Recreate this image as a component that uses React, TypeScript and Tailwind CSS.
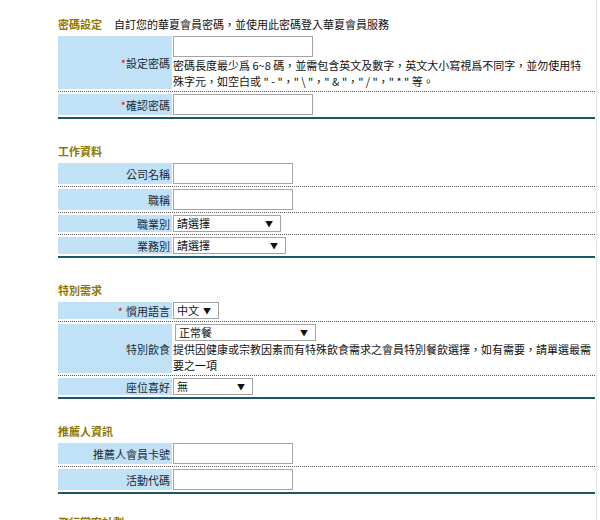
import type { ReactNode } from "react";

// Member profile form: password / work info / special needs / referrer sections.

function Section({
  title,
  desc,
  children,
  first = false,
}: {
  title: string;
  desc?: string;
  children: ReactNode;
  first?: boolean;
}) {
  return (
    <div className={first ? "" : "mt-[24px]"}>
      <div className="h-[18px] leading-[16px] text-[11px]">
        <span className="font-bold text-[#8f7700]">{title}</span>
        {desc && <span className="ml-[12px] text-[#111]">{desc}</span>}
      </div>
      <div className="border-b-2 border-[#1d5767]">{children}</div>
    </div>
  );
}

function Row({
  label,
  req,
  gap = false,
  last = false,
  children,
}: {
  label: string;
  req?: boolean;
  gap?: boolean;
  last?: boolean;
  children: ReactNode;
}) {
  return (
    <div
      className={
        last
          ? "flex pt-[2px] pb-[2px]"
          : "flex py-[2px] border-b border-dotted border-[#555]"
      }
    >
      <div className="w-[114px] shrink-0 bg-[#c1e2f6] flex items-center justify-end pr-[2px] text-[11px] leading-[16px] text-[#1b2a38]">
        {req && (
          <span className={gap ? "text-[#e01010] mr-[3px]" : "text-[#e01010]"}>*</span>
        )}
        {label}
      </div>
      <div className="flex-1 min-w-0 pl-[1px] text-[11px] leading-[16px] text-[#111]">{children}</div>
    </div>
  );
}

function TextBox({ w }: { w: string }) {
  return <div className={`${w} h-[21px] border border-[#a4a4a4] bg-white`} />;
}

function Select({ w, value, ml = "" }: { w: string; value: string; ml?: string }) {
  return (
    <div
      className={`${w} ${ml} h-[17px] border border-[#a4a4a4] bg-white flex items-center justify-between pl-[3px] pr-[7px] text-[11px] leading-[15px]`}
    >
      <span>{value}</span>
      <span className="text-[8px] leading-none text-[#111]">▼</span>
    </div>
  );
}

export default function App() {
  return (
    <div className="w-[600px] h-[520px] overflow-hidden bg-white font-['Noto_Sans_CJK_TC','Noto_Sans_CJK_SC',sans-serif]">
      <div className="w-[597px] h-full border-r border-[#e4e4e4] pl-[58px] pr-[1px] pt-[16px]">
        <Section first title="密碼設定" desc="自訂您的華夏會員密碼，並使用此密碼登入華夏會員服務">
          <Row label="設定密碼" req>
            <TextBox w="w-[140px]" />
            <div className="whitespace-nowrap">
              密碼長度最少爲 6~8 碼，並需包含英文及數字，英文大小寫視爲不同字，並勿使用特
              <br />
              殊字元，如空白或 " - "，" \ "，" &amp; "，" / "，" * " 等。
            </div>
          </Row>
          <Row label="確認密碼" req last>
            <TextBox w="w-[140px]" />
          </Row>
        </Section>

        <Section title="工作資料">
          <Row label="公司名稱">
            <TextBox w="w-[120px]" />
          </Row>
          <Row label="職稱">
            <TextBox w="w-[120px]" />
          </Row>
          <Row label="職業別">
            <Select w="w-[108px]" value="請選擇" />
          </Row>
          <Row label="業務別" last>
            <Select w="w-[113px]" value="請選擇" />
          </Row>
        </Section>

        <Section title="特別需求">
          <Row label="慣用語言" req gap>
            <Select w="w-[46px]" value="中文" />
          </Row>
          <Row label="特別飲食">
            <Select w="w-[141px]" ml="ml-[2px]" value="正常餐" />
            <div className="whitespace-nowrap">
              提供因健康或宗教因素而有特殊飲食需求之會員特別餐飲選擇，如有需要，請單選最需
              <br />
              要之一項
            </div>
          </Row>
          <Row label="座位喜好" last>
            <Select w="w-[80px]" value="無" />
          </Row>
        </Section>

        <Section title="推薦人資訊">
          <Row label="推薦人會員卡號">
            <TextBox w="w-[120px]" />
          </Row>
          <Row label="活動代碼" last>
            <TextBox w="w-[120px]" />
          </Row>
        </Section>

        <div className="mt-[20px] h-[18px] leading-[16px] text-[11px] font-bold text-[#8f7700]">
          飛行常客計劃
        </div>
      </div>
    </div>
  );
}
